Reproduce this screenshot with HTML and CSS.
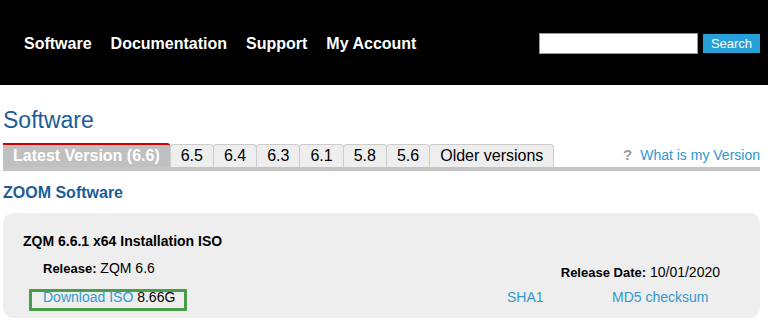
FILE: index.html
```html
<!DOCTYPE html>
<html lang="en">
<head>
  <meta charset="UTF-8">
  <meta name="viewport" content="width=device-width, initial-scale=1.0">
  <title>Software</title>
  <link rel="stylesheet" href="styles.css">
</head>
<body>
  <header class="topbar">
    <nav class="mainnav">
      <a href="#">Software</a>
      <a href="#">Documentation</a>
      <a href="#">Support</a>
      <a href="#">My Account</a>
    </nav>
    <form class="search">
      <input type="text" class="search-input">
      <button type="button" class="search-btn">Search</button>
    </form>
  </header>

  <main class="content">
    <h1 class="page-title">Software</h1>

    <div class="tabs">
      <a class="tab active" href="#">Latest Version (6.6)</a>
      <a class="tab" href="#">6.5</a>
      <a class="tab" href="#">6.4</a>
      <a class="tab" href="#">6.3</a>
      <a class="tab" href="#">6.1</a>
      <a class="tab" href="#">5.8</a>
      <a class="tab" href="#">5.6</a>
      <a class="tab" href="#">Older versions</a>
      <a class="whatver" href="#"><span class="qmark">?</span>What is my Version</a>
    </div>

    <h2 class="section-title">ZOOM Software</h2>

    <div class="panel">
      <div class="panel-title">ZQM 6.6.1 x64 Installation ISO</div>
      <div class="release-row">
        <div class="release"><b>Release:</b> ZQM 6.6</div>
        <div class="release-date"><b>Release Date:</b> 10/01/2020</div>
      </div>
      <div class="links-row">
        <div><span class="download"><a href="#">Download ISO</a> 8.66G</span></div>
        <a href="#">SHA1</a>
        <a href="#">MD5 checksum</a>
      </div>
    </div>
  </main>
</body>
</html>
```

FILE: styles.css
```css
body {
  margin: 0;
  font-family: "Liberation Sans", Arial, sans-serif;
  color: #000;
  background: #fff;
}

a {
  text-decoration: none;
  color: #3398cc;
}

/* Top bar */
.topbar {
  box-sizing: border-box;
  height: 85px;
  padding: 2px 8px 0 24px;
  background: #000;
  display: flex;
  align-items: center;
}

.mainnav {
  display: flex;
  gap: 19px;
}

.mainnav a {
  color: #fff;
  font-size: 16px;
  font-weight: bold;
}

.search {
  margin: 0 0 0 auto;
  display: flex;
  align-items: center;
  gap: 5px;
}

.search-input {
  box-sizing: border-box;
  width: 159px;
  height: 21px;
  margin: 0;
  padding: 0 3px;
  border: 1px solid #9a9a9a;
  background: #fff;
}

.search-btn {
  width: 57px;
  height: 19px;
  padding: 0;
  border: none;
  background: #27a0d8;
  color: #fff;
  font-family: "Liberation Sans", Arial, sans-serif;
  font-size: 13px;
}

/* Content */
.content {
  padding: 0 8px 0 3px;
}

.page-title {
  margin: 21px 0 0;
  font-size: 23px;
  font-weight: normal;
  line-height: 28px;
  color: #1c5d99;
}

.tabs {
  margin-top: 9px;
  display: flex;
  align-items: flex-end;
  border-bottom: 4px solid #c4c4c4;
}

.tab {
  height: 22px;
  padding: 0 10px;
  margin-right: -1px;
  line-height: 22px;
  font-size: 16px;
  color: #000;
  background: #eee;
  border: 1px solid #ccc;
  border-bottom: none;
  border-radius: 4px 4px 0 0;
}

.tab.active {
  margin-right: 0;
  color: #fff;
  font-weight: bold;
  background: #c0c0c0;
  border: none;
  border-top: 2px solid #cc0000;
  border-radius: 0 3px 0 0;
}

.whatver {
  margin: 0 0 1px auto;
  font-size: 14px;
  line-height: 22px;
  color: #2f96d0;
}

.qmark {
  margin-right: 8px;
  font-size: 15px;
  font-weight: bold;
  color: #9a9a9a;
}

.section-title {
  margin: 12px 0 0;
  font-size: 16px;
  line-height: 19px;
  color: #1c5d99;
}

/* Download panel */
.panel {
  margin-top: 11px;
  padding: 20px 20px 7px;
  background: #eee;
  border-radius: 10px;
}

.panel-title {
  font-size: 14px;
  font-weight: bold;
  line-height: 16px;
}

.release-row {
  margin-top: 10px;
  display: flex;
  justify-content: space-between;
  align-items: flex-start;
  padding: 0 20px;
  font-size: 14px;
  line-height: 18px;
}

.release-row b {
  font-size: 13px;
}

.release-date {
  padding-top: 4px;
}

.links-row {
  margin-top: 7px;
  display: grid;
  grid-template-columns: 484px 105px auto;
  align-items: baseline;
  font-size: 14px;
}

.download {
  display: inline-block;
  margin-left: 6px;
  padding: 0 9px 6px 11px;
  line-height: 10px;
  border: 3px solid #4a9e4a;
}
```
